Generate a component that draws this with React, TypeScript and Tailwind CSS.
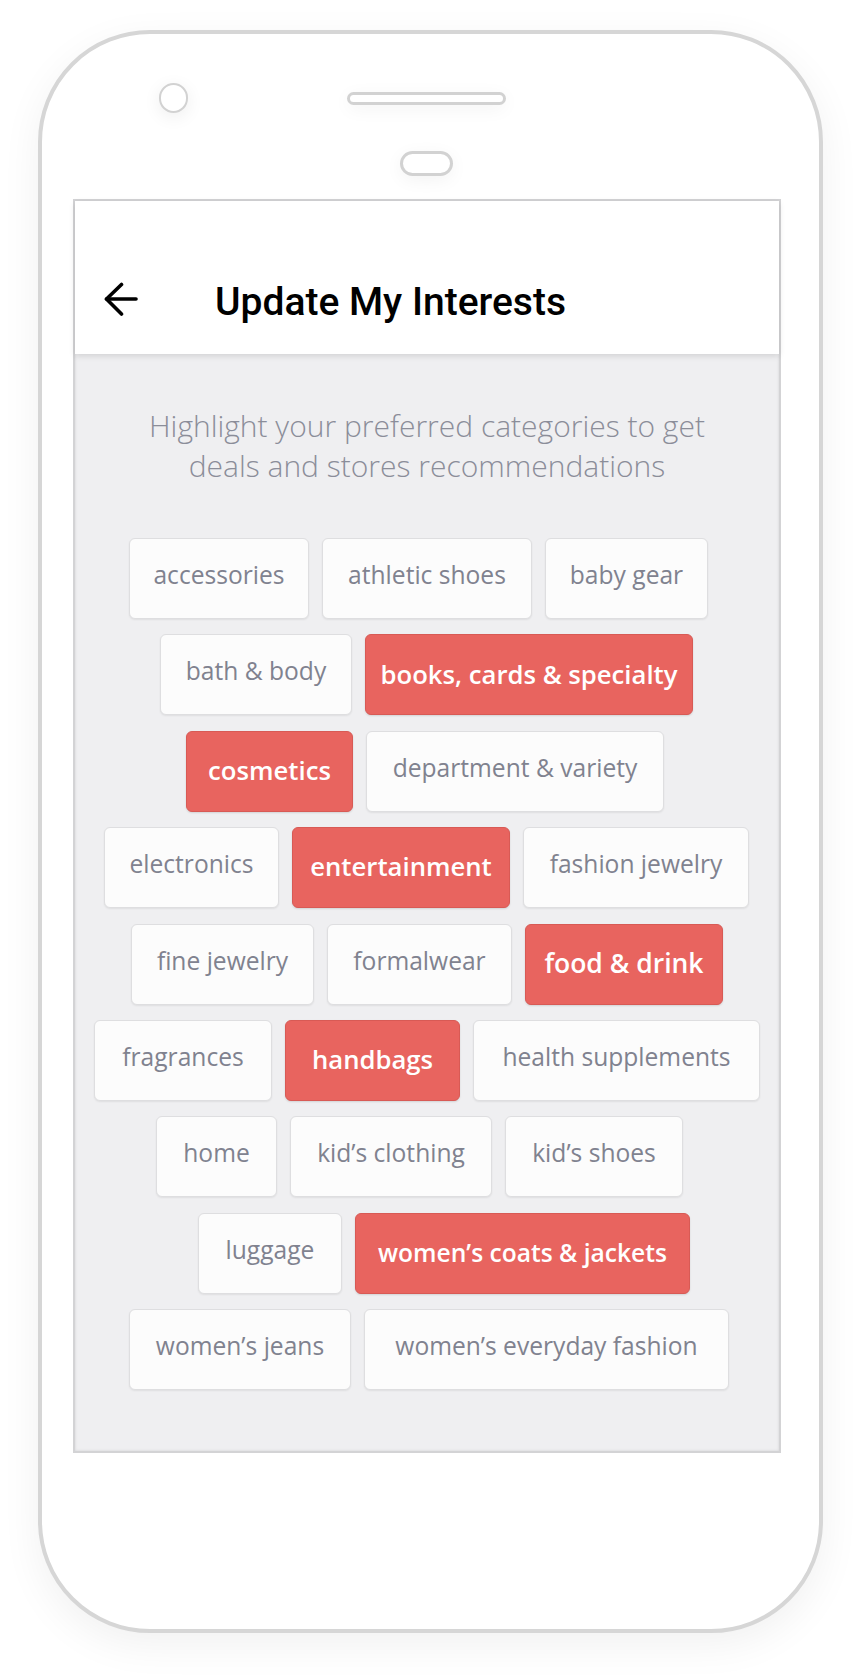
import React from "react";

type Chip = { label: string; w: number; on?: boolean; fs?: number };

const rows: { pl: number; chips: Chip[] }[] = [
  {
    pl: 54,
    chips: [
      { label: "accessories", w: 180 },
      { label: "athletic shoes", w: 210 },
      { label: "baby gear", w: 163 },
    ],
  },
  {
    pl: 85,
    chips: [
      { label: "bath & body", w: 192 },
      { label: "books, cards & specialty", w: 328, on: true },
    ],
  },
  {
    pl: 111,
    chips: [
      { label: "cosmetics", w: 167, on: true },
      { label: "department & variety", w: 298 },
    ],
  },
  {
    pl: 29,
    chips: [
      { label: "electronics", w: 175 },
      { label: "entertainment", w: 218, on: true },
      { label: "fashion jewelry", w: 226 },
    ],
  },
  {
    pl: 56,
    chips: [
      { label: "fine jewelry", w: 183 },
      { label: "formalwear", w: 185 },
      { label: "food & drink", w: 198, on: true, fs: 26.5 },
    ],
  },
  {
    pl: 19,
    chips: [
      { label: "fragrances", w: 178 },
      { label: "handbags", w: 175, on: true },
      { label: "health supplements", w: 287 },
    ],
  },
  {
    pl: 81,
    chips: [
      { label: "home", w: 121 },
      { label: "kid’s clothing", w: 202 },
      { label: "kid’s shoes", w: 178 },
    ],
  },
  {
    pl: 123,
    chips: [
      { label: "luggage", w: 144 },
      { label: "women’s coats & jackets", w: 335, on: true, fs: 24.6 },
    ],
  },
  {
    pl: 54,
    chips: [
      { label: "women’s jeans", w: 222 },
      { label: "women’s everyday fashion", w: 365 },
    ],
  },
];

function InterestChip({ chip }: { chip: Chip }) {
  return (
    <div
      style={{ width: chip.w, fontSize: chip.fs }}
      className={`flex h-[81px] shrink-0 items-center justify-center whitespace-nowrap rounded-[6px] border ${
        chip.on
          ? "border-[#d85a55] bg-[#e8645f] text-[25.7px] font-semibold text-white shadow-[0_1px_2px_rgba(0,0,0,0.12)]"
          : "border-[#dedee0] bg-[#fcfcfc] pb-[6px] text-[24.6px] font-normal text-[#80828f] shadow-[0_1px_2px_rgba(0,0,0,0.07)]"
      }`}
    >
      {chip.label}
    </div>
  );
}

export default function App() {
  return (
    <div className="h-[1680px] w-[860px] bg-white pl-[38px] pt-[30px] font-['Open_Sans',sans-serif]">
      <div className="h-[1603px] w-[785px] rounded-[112px] border-4 border-[#d6d6d6] bg-white shadow-[0_12px_40px_rgba(0,0,0,0.06)]">
        {/* camera + speaker */}
        <div className="mt-[49px] flex h-[30px] items-center pl-[117px]">
          <div className="h-[30px] w-[29px] rounded-full border-[2.5px] border-[#d2d2d2] bg-white shadow-[0_4px_18px_rgba(0,0,0,0.07)]" />
          <div className="ml-[159px] h-[13px] w-[159px] rounded-full border-[3px] border-[#d2d2d2] bg-white shadow-[0_4px_18px_rgba(0,0,0,0.05)]" />
        </div>
        {/* home button */}
        <div className="ml-[358px] mt-[38px] h-[25px] w-[53px] rounded-full border-[3px] border-[#d2d2d2] bg-white shadow-[0_4px_18px_rgba(0,0,0,0.05)]" />

        {/* screen */}
        <div className="ml-[31px] mt-[23px] flex h-[1254px] w-[708px] flex-col border-2 border-[#d3d3d5] bg-[#efeff1] shadow-[inset_0_0_3px_rgba(0,0,0,0.12)]">
          <div className="relative z-10 flex h-[153px] shrink-0 items-start bg-white pl-[29px] pt-[79px] shadow-[0_2px_6px_rgba(0,0,0,0.13)]">
            <svg width="34" height="34" viewBox="0 0 34 34" className="mt-[2px]" fill="none" stroke="#000" strokeWidth="3.6" strokeLinecap="round" strokeLinejoin="round">
              <path d="M2.5 17H32" />
              <path d="M17.5 2.5L2.5 17l15 15" />
            </svg>
            <h1 className="ml-[77px] font-['Roboto',sans-serif] text-[39px] font-medium leading-[44px] text-black">
              Update My Interests
            </h1>
          </div>

          <p className="mt-[52px] text-center text-[30px] font-light leading-[40px] text-[#8b8d99]">
            Highlight your preferred categories to get
            <br />
            deals and stores recommendations
          </p>

          <div className="mt-[52px] flex flex-col gap-y-[15.4px]">
            {rows.map((row, i) => (
              <div key={i} style={{ paddingLeft: row.pl }} className="flex gap-[13px]">
                {row.chips.map((c) => (
                  <InterestChip key={c.label} chip={c} />
                ))}
              </div>
            ))}
          </div>
        </div>
      </div>
    </div>
  );
}
